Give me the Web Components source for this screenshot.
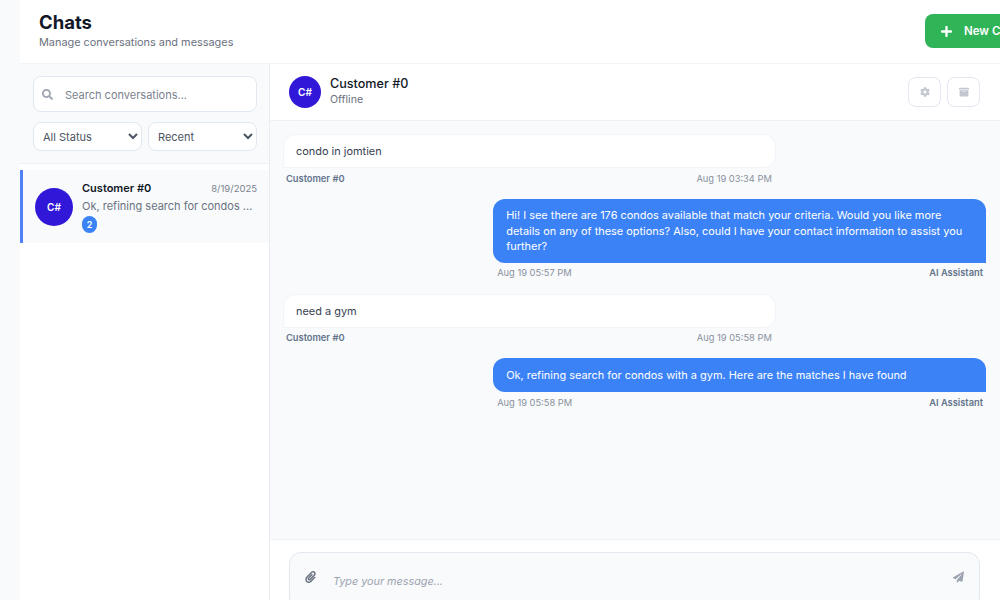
<!DOCTYPE html>
<html>
<head>
<meta charset="utf-8">
<title>Chats</title>
<style>
  html, body { margin: 0; height: 100%; overflow: hidden; background: #f8fafc; }
  body { font-family: Inter, "Liberation Sans", sans-serif; }
</style>
</head>
<body>
<chat-app></chat-app>
<script>
class PageHeader extends HTMLElement {
  constructor() {
    super();
    this.attachShadow({ mode: 'open' });
    this.shadowRoot.innerHTML = `
      <style>
        :host { display: flex; justify-content: space-between; align-items: flex-start; height: 63px; background: #fff; border-bottom: 1px solid #f1f5f9; padding-left: 19px; }
        h1 { margin: 11px 0 0; font-size: 18.5px; line-height: 22px; font-weight: 700; color: #111827; }
        p { margin: 2px 0 0; font-size: 10.9px; line-height: 15px; color: #6b7280; }
        button { display: flex; align-items: center; gap: 12px; width: 120px; flex: none; height: 34px; margin: 14px -45px 0 0; padding: 0 16px; border: 0; border-radius: 8px 0 0 8px; background: #2fb457; color: #fff; font: 600 11.5px Inter, sans-serif; white-space: nowrap; overflow: hidden; }
        svg { width: 11px; height: 13px; flex: none; }
      </style>
      <div>
        <h1>Chats</h1>
        <p>Manage conversations and messages</p>
      </div>
      <button>
        <svg viewBox="0 0 448 512"><path fill="#fff" d="M416 208H272V64c0-17.67-14.33-32-32-32h-32c-17.67 0-32 14.33-32 32v144H32c-17.67 0-32 14.33-32 32v32c0 17.67 14.33 32 32 32h144v144c0 17.67 14.33 32 32 32h32c17.67 0 32-14.33 32-32V304h144c17.67 0 32-14.33 32-32v-32c0-17.67-14.33-32-32-32z"/></svg>
        New Chat
      </button>
    `;
  }
}

class UserAvatar extends HTMLElement {
  constructor() {
    super();
    this.attachShadow({ mode: 'open' });
    this.shadowRoot.innerHTML = `
      <style>
        :host { display: flex; align-items: center; justify-content: center; flex: none; width: var(--size, 38px); height: var(--size, 38px); border-radius: 50%; background: #3118d8; color: #fff; font-size: 10px; font-weight: 600; }
      </style>
      <slot></slot>
    `;
  }
}

class ConvItem extends HTMLElement {
  constructor() {
    super();
    this.attachShadow({ mode: 'open' });
    this.shadowRoot.innerHTML = `
      <style>
        :host { display: flex; gap: 9px; align-items: center; height: 73px; margin-top: 6px; padding: 0 12px; background: #f8fafc; border-left: 3px solid #4f83f5; box-sizing: border-box; }
        .body { flex: 1; min-width: 0; }
        .top { display: flex; justify-content: space-between; align-items: baseline; }
        .name { font-size: 11px; line-height: 15px; font-weight: 600; color: #111827; }
        .date { font-size: 9.5px; color: #7b828e; }
        .text { margin-top: 3px; font-size: 11px; line-height: 15px; color: #6b7280; white-space: nowrap; }
        .badge { display: flex; align-items: center; justify-content: center; width: 15px; height: 17px; margin-top: 2px; border-radius: 8px; background: #3b82f6; color: #fff; font-size: 9px; font-weight: 600; }
      </style>
      <user-avatar>C#</user-avatar>
      <div class="body">
        <div class="top"><span class="name">Customer #0</span><span class="date">8/19/2025</span></div>
        <div class="text">Ok, refining search for condos ...</div>
        <div class="badge">2</div>
      </div>
    `;
  }
}

class ChatSidebar extends HTMLElement {
  constructor() {
    super();
    this.attachShadow({ mode: 'open' });
    this.shadowRoot.innerHTML = `
      <style>
        :host { display: block; width: 250px; flex: none; background: #fff; border-right: 1px solid #e9edf2; box-sizing: border-box; }
        .filters { display: flex; flex-direction: column; gap: 10px; height: 100px; padding: 12px 12px 0 13px; background: #f8fafc; border-bottom: 1px solid #eef1f5; box-sizing: border-box; }
        .search { display: flex; align-items: center; gap: 12px; height: 36px; flex: none; padding: 0 8px; background: #fff; border: 1px solid #e2e8f0; border-radius: 8px; box-sizing: border-box; }
        .search svg { width: 11px; height: 11px; flex: none; }
        .search span { padding-top: 1px; font-size: 11px; color: #7b828e; }
        .row { display: flex; gap: 6px; }
        select { flex: 1; min-width: 0; width: 50%; height: 29px; padding: 0 4px 0 5px; background: #fff; border: 1px solid #e2e8f0; border-radius: 8px; font: 11px Inter, sans-serif; color: #4b5563; }
      </style>
      <div class="filters">
        <div class="search">
          <svg viewBox="0 0 512 512"><path fill="#9ca3af" d="M505 442.7L405.3 343c-4.5-4.5-10.6-7-17-7H372c27.6-35.3 44-79.7 44-128C416 93.1 322.9 0 208 0S0 93.1 0 208s93.1 208 208 208c48.3 0 92.7-16.4 128-44v16.3c0 6.4 2.5 12.5 7 17l99.7 99.7c9.4 9.4 24.6 9.4 33.9 0l28.3-28.3c9.4-9.4 9.4-24.6.1-34zM208 336c-70.7 0-128-57.2-128-128 0-70.7 57.2-128 128-128 70.7 0 128 57.2 128 128 0 70.7-57.2 128-128 128z"/></svg>
          <span>Search conversations...</span>
        </div>
        <div class="row">
          <select><option>All Status</option></select>
          <select><option>Recent</option></select>
        </div>
      </div>
      <conv-item></conv-item>
    `;
  }
}

class ChatBubble extends HTMLElement {
  static get observedAttributes() { return ['who', 'time']; }
  constructor() {
    super();
    this.attachShadow({ mode: 'open' });
    this.shadowRoot.innerHTML = `
      <style>
        :host { display: block; width: 70.1%; }
        :host([mine]) { align-self: flex-end; }
        .text { padding: 9px 12px 7.6px; min-height: 34px; box-sizing: border-box; background: #fff; border: 1px solid #f1f5f9; border-radius: 12px 12px 12px 0; font-size: 10.95px; line-height: 15.4px; color: #374151; }
        :host([mine]) .text { background: #3b82f6; border: 0; border-radius: 12px 12px 0 12px; color: #fff; padding: 9.6px 13px 8.4px; }
        .meta { display: flex; justify-content: space-between; padding: 3.6px 4px 0 3px; font-size: 9.3px; line-height: 13px; color: #64748b; }
        :host([mine]) .meta { flex-direction: row-reverse; padding: 3.6px 3px 0 4px; }
        .who { font-weight: 600; }
        .time { color: #8a919c; }
      </style>
      <div class="text"><slot></slot></div>
      <div class="meta"><span class="who"></span><span class="time"></span></div>
    `;
  }
  attributeChangedCallback(name, oldValue, value) {
    this.shadowRoot.querySelector('.' + name).textContent = value;
  }
}

class ChatPanel extends HTMLElement {
  constructor() {
    super();
    this.attachShadow({ mode: 'open' });
    this.shadowRoot.innerHTML = `
      <style>
        :host { display: flex; flex-direction: column; flex: 1; min-width: 0; }
        .head { display: flex; align-items: center; gap: 9px; height: 56px; flex: none; padding: 0 20px 0 19px; background: #fff; border-bottom: 1px solid #eef1f5; --size: 32px; }
        .who { flex: 1; margin-top: -2px; }
        .name { font-size: 12.6px; line-height: 16px; font-weight: 500; color: #111827; }
        .status { margin-top: 1px; font-size: 10.6px; line-height: 14px; color: #6b7280; }
        .tools { display: flex; gap: 6px; }
        .tools div { display: flex; align-items: center; justify-content: center; width: 33px; height: 30px; background: #fff; border: 1px solid #e2e8f0; border-radius: 8px; box-sizing: border-box; }
        .tools svg { width: 10px; height: 10px; }
        .list { display: flex; flex-direction: column; gap: 14.1px; flex: 1; min-height: 0; padding: 13px 14px 0 13px; background: #f8fafc; }
        .composer { flex: none; height: 61px; padding: 12px 20px 0 19px; background: #fff; border-top: 1px solid #eef1f5; box-sizing: border-box; }
        .input { display: flex; align-items: center; gap: 17px; height: 58px; padding: 0 15px; background: #f8fafc; border: 1px solid #e2e8f0; border-radius: 12px; box-sizing: border-box; }
        .input svg { width: 11px; height: 12px; flex: none; margin-top: -8px; }
        .input span { flex: 1; font-size: 10.8px; font-style: italic; color: #9ca3af; }
      </style>
      <div class="head">
        <user-avatar>C#</user-avatar>
        <div class="who">
          <div class="name">Customer #0</div>
          <div class="status">Offline</div>
        </div>
        <div class="tools">
          <div><svg viewBox="0 0 512 512"><path fill="#c2c7d0" d="M487.4 315.7l-42.6-24.6c4.3-23.2 4.3-47 0-70.2l42.6-24.6c4.9-2.8 7.1-8.6 5.5-14-11.1-35.6-30-67.8-54.7-94.6-3.8-4.1-10-5.1-14.8-2.3L380.8 110c-17.9-15.4-38.5-27.3-60.8-35.1V25.8c0-5.6-3.9-10.5-9.4-11.7-36.7-8.2-74.3-7.8-109.2 0-5.5 1.2-9.4 6.1-9.4 11.7V75c-22.2 7.9-42.8 19.8-60.8 35.1L88.7 85.5c-4.9-2.8-11-1.9-14.8 2.3-24.7 26.7-43.6 58.9-54.7 94.6-1.7 5.4.6 11.2 5.5 14L67.3 221c-4.3 23.2-4.3 47 0 70.2l-42.6 24.6c-4.9 2.8-7.1 8.6-5.5 14 11.1 35.6 30 67.8 54.7 94.6 3.8 4.1 10 5.1 14.8 2.3l42.6-24.6c17.9 15.4 38.5 27.3 60.8 35.1v49.2c0 5.6 3.9 10.5 9.4 11.7 36.7 8.2 74.3 7.8 109.2 0 5.5-1.2 9.4-6.1 9.4-11.7v-49.2c22.2-7.9 42.8-19.8 60.8-35.1l42.6 24.6c4.9 2.8 11 1.9 14.8-2.3 24.7-26.7 43.6-58.9 54.7-94.6 1.5-5.5-.7-11.3-5.6-14.1zM256 336c-44.1 0-80-35.9-80-80s35.9-80 80-80 80 35.9 80 80-35.9 80-80 80z"/></svg></div>
          <div><svg viewBox="0 0 512 512"><path fill="#c2c7d0" d="M32 448c0 17.7 14.3 32 32 32h384c17.7 0 32-14.3 32-32V160H32v288zm160-212c0-6.6 5.4-12 12-12h104c6.6 0 12 5.4 12 12v8c0 6.6-5.4 12-12 12H204c-6.6 0-12-5.4-12-12v-8zM480 32H32C14.3 32 0 46.3 0 64v48c0 8.8 7.2 16 16 16h480c8.8 0 16-7.2 16-16V64c0-17.7-14.3-32-32-32z"/></svg></div>
        </div>
      </div>
      <div class="list">
        <chat-bubble who="Customer #0" time="Aug 19 03:34 PM">condo in jomtien</chat-bubble>
        <chat-bubble mine who="AI Assistant" time="Aug 19 05:57 PM">Hi! I see there are 176 condos available that match your criteria. Would you like more details on any of these options? Also, could I have your contact information to assist you further?</chat-bubble>
        <chat-bubble who="Customer #0" time="Aug 19 05:58 PM">need a gym</chat-bubble>
        <chat-bubble mine who="AI Assistant" time="Aug 19 05:58 PM">Ok, refining search for condos with a gym. Here are the matches I have found</chat-bubble>
      </div>
      <div class="composer">
        <div class="input">
          <svg viewBox="0 0 448 512"><path fill="#6b7280" d="M43.246 466.142c-58.43-60.289-57.341-157.511 1.386-217.581L254.392 34c44.316-45.332 116.351-45.336 160.671 0 43.89 44.894 43.943 117.329 0 162.276L232.214 383.128c-29.855 30.537-78.633 30.111-107.982-.998-28.275-29.97-27.368-77.473 1.452-106.953l143.743-146.835c6.182-6.314 16.312-6.422 22.626-.241l22.861 22.379c6.315 6.182 6.422 16.312.241 22.626L171.427 319.927c-4.932 5.045-5.236 13.428-.648 18.292 4.372 4.634 11.245 4.711 15.688.165l182.849-186.851c19.613-20.062 19.613-52.725-.011-72.798-19.189-19.627-49.957-19.637-69.154 0L90.39 293.295c-34.763 35.56-35.299 93.12-1.191 128.313 34.01 35.093 88.985 35.137 123.058.286l172.06-175.999c6.177-6.319 16.307-6.433 22.626-.256l22.877 22.364c6.319 6.177 6.434 16.307.256 22.626l-172.06 175.998c-59.576 60.938-155.943 60.216-214.77-.485z"/></svg>
          <span>Type your message...</span>
          <svg viewBox="0 0 512 512"><path fill="#9ca3af" d="M476 3.2L12.5 270.6c-18.1 10.4-15.8 35.6 2.2 43.2L121 358.4l287.3-253.2c5.5-4.9 13.3 2.6 8.6 8.3L176 407v80.5c0 23.6 28.5 32.9 42.5 15.8L282 426l124.6 52.2c14.2 6 30.4-2.9 33-18.2l72-432C515 7.8 493.3-6.8 476 3.2z"/></svg>
        </div>
      </div>
    `;
  }
}

class ChatApp extends HTMLElement {
  constructor() {
    super();
    this.attachShadow({ mode: 'open' });
    this.shadowRoot.innerHTML = `
      <style>
        :host { display: block; width: 1000px; height: 600px; padding-left: 20px; box-sizing: border-box; overflow: hidden; }
        .main { display: flex; height: 536px; }
      </style>
      <page-header></page-header>
      <div class="main">
        <chat-sidebar></chat-sidebar>
        <chat-panel></chat-panel>
      </div>
    `;
  }
}

customElements.define('page-header', PageHeader);
customElements.define('user-avatar', UserAvatar);
customElements.define('conv-item', ConvItem);
customElements.define('chat-sidebar', ChatSidebar);
customElements.define('chat-bubble', ChatBubble);
customElements.define('chat-panel', ChatPanel);
customElements.define('chat-app', ChatApp);
</script>
</body>
</html>
